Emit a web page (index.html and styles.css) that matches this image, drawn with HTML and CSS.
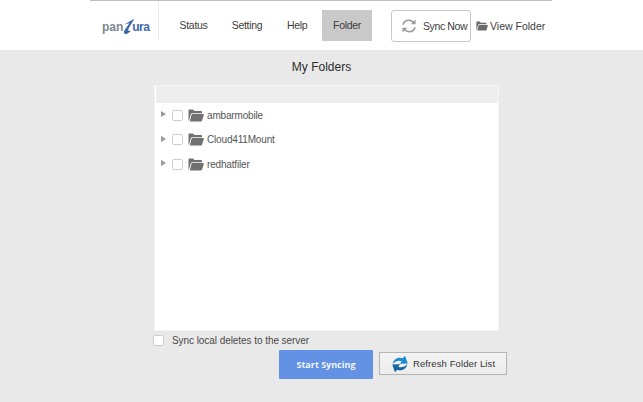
FILE: index.html
```html
<!DOCTYPE html>
<html lang="en">
<head>
<meta charset="utf-8">
<title>My Folders</title>
<link rel="stylesheet" href="styles.css">
</head>
<body>
<svg class="defs" width="0" height="0" aria-hidden="true">
  <symbol id="folder" viewBox="0 0 16 13">
    <path d="M0.5 11.5V1.6C0.5 1 1 .6 1.5 .6H5L6.4 2.1H13C13.6 2.1 14 2.5 14 3V4.2H4.2C3.5 4.2 3.1 4.5 2.9 5.1L.9 11.8C.7 11.9 .5 11.8 .5 11.5Z"/>
    <path d="M4.3 5H15C15.6 5 16 5.5 15.8 6L14 11.8C13.8 12.3 13.4 12.6 12.9 12.6H1.8L3.6 5.5C3.7 5.2 4 5 4.3 5Z"/>
  </symbol>
</svg>
<header class="topbar">
  <div class="topbar-inner">
    <div class="logo"><span class="logo-pan">pan</span><svg class="logo-z" viewBox="0 0 13 17" aria-hidden="true"><path d="M2.5 6.5 12.5 .5 6.6 10.5C5.6 12.4 6.2 13.2 9 13.2L4.2 16.2C1.4 15.6 1.6 13.6 3 11.4L7.4 5.2Z"/></svg><span class="logo-ura">ura</span></div>
    <nav class="nav">
      <a class="nav-item">Status</a>
      <a class="nav-item">Setting</a>
      <a class="nav-item">Help</a>
      <a class="nav-item nav-active">Folder</a>
    </nav>
    <button class="sync-now">
      <svg class="sync-icon" viewBox="0 0 18 18" aria-hidden="true">
        <path class="sync-stroke" d="M2.2 7.6C3 4.6 5.7 2.6 8.9 2.6 11 2.6 12.8 3.4 14.2 5"/>
        <path class="sync-fill" d="M16.4 1.6V7H11Z"/>
        <path class="sync-stroke" d="M15.8 10.4C15 13.4 12.3 15.4 9.1 15.4 7 15.4 5.2 14.6 3.8 13"/>
        <path class="sync-fill" d="M1.6 16.4V11H7Z"/>
      </svg>
      <span>Sync Now</span>
    </button>
    <a class="view-folder"><svg class="view-folder-icon"><use href="#folder"/></svg>View Folder</a>
  </div>
</header>
<main class="content">
  <h1 class="title">My Folders</h1>
  <section class="panel">
    <div class="panel-head"></div>
    <ul class="tree">
      <li class="tree-row"><span class="caret"></span><span class="check"></span><svg class="tree-folder"><use href="#folder"/></svg><span>ambarmobile</span></li>
      <li class="tree-row"><span class="caret"></span><span class="check"></span><svg class="tree-folder"><use href="#folder"/></svg><span>Cloud411Mount</span></li>
      <li class="tree-row"><span class="caret"></span><span class="check"></span><svg class="tree-folder"><use href="#folder"/></svg><span>redhatfiler</span></li>
    </ul>
  </section>
  <label class="delete-option"><span class="check check-outer"></span>Sync local deletes to the server</label>
  <div class="actions">
    <button class="start">Start Syncing</button>
    <button class="refresh">
      <svg class="refresh-icon" viewBox="0 0 20 20" aria-hidden="true">
        <path class="refresh-a" d="M2 10C2.4 5 7.6 1.6 13.2 3.6L15.6 .8 18.6 9.4 9.8 9.6 12 6.9C8 5.4 4.4 6.8 2 10Z"/>
        <path class="refresh-b" d="M18 10C17.6 15 12.4 18.4 6.8 16.4L4.4 19.2 1.4 10.6 10.2 10.4 8 13.1C12 14.6 15.6 13.2 18 10Z"/>
      </svg>
      <span>Refresh Folder List</span>
    </button>
  </div>
</main>
</body>
</html>
```
FILE: styles.css
```css
* { box-sizing: border-box; }
html, body { margin: 0; height: 100%; }
body {
  width: 643px;
  height: 402px;
  overflow: hidden;
  background: #e9e9e9;
  font-family: "Liberation Sans", Arial, sans-serif;
  color: #3a3a3a;
  display: flex;
  flex-direction: column;
}
.defs { position: absolute; }
.topbar { height: 50px; background: #fff; flex: none; }
.topbar-inner {
  margin-left: 90px;
  width: 462px;
  height: 50px;
  border-top: 1px solid #bdbdbd;
  display: flex;
  align-items: flex-start;
}
.logo {
  width: 69px;
  height: 39px;
  border-right: 1px solid #ececec;
  padding: 18px 0 0 12px;
  display: flex;
  align-items: flex-start;
  font-size: 12px;
  font-weight: 700;
  line-height: 17px;
}
.logo-pan { color: #7c8696; }
.logo-ura { color: #3c67ad; margin-left: -3px; letter-spacing: -.6px; }
.logo-z { width: 13px; height: 17px; fill: #3c67ad; margin: -1px 0 0 -1px; flex: none; }
.nav { display: flex; margin: 9px 0 0 0; }
.nav-item {
  height: 31px;
  line-height: 31px;
  font-size: 10.5px;
  letter-spacing: -.3px;
  color: #3c3c3c;
  text-align: center;
}
.nav-item:nth-child(1) { width: 69px; }
.nav-item:nth-child(2) { width: 38px; }
.nav-item:nth-child(3) { width: 20px; margin-left: 21px; }
.nav-item:nth-child(4) { margin-left: 15px; }
.nav-active { width: 50px; background: #c9c9c9; }
.sync-now {
  margin: 9px 0 0 19px;
  width: 80px;
  height: 32px;
  padding: 0 0 0 9px;
  border: 1px solid #c8c8c8;
  border-radius: 3px;
  background: #fff;
  display: flex;
  align-items: center;
  gap: 6px;
  font: 10.5px "Liberation Sans", Arial, sans-serif;
  letter-spacing: -.4px;
  color: #3c3c3c;
  white-space: nowrap;
}
.sync-icon { width: 16px; height: 16px; flex: none; }
.sync-stroke { fill: none; stroke: #999; stroke-width: 1.8; }
.sync-fill { fill: #999; }
.view-folder {
  margin: 9px 0 0 5px;
  height: 32px;
  display: flex;
  align-items: center;
  gap: 2px;
  font-size: 10.5px;
  color: #3c3c3c;
  white-space: nowrap;
}
.view-folder-icon { width: 12px; height: 10px; fill: #6a6a6a; flex: none; }
.content { flex: 1; display: flex; flex-direction: column; }
.title {
  margin: 10px 0 0;
  height: 15px;
  line-height: 15px;
  text-align: center;
  font-size: 12px;
  font-weight: 400;
  color: #2c2c2c;
}
.panel {
  margin: 10px 0 0 154px;
  width: 345px;
  height: 246px;
  background: #fff;
  border: 1px solid #f3f3f3;
}
.panel-head { height: 17px; background: #eeeeee; margin-left: 1px; }
.tree { list-style: none; margin: 0; padding: 0; }
.tree-row {
  height: 24.5px;
  padding: 0 0 0 6px;
  display: flex;
  align-items: center;
  font-size: 10px;
  letter-spacing: -.17px;
  color: #555;
}
.caret {
  width: 0;
  height: 0;
  border-left: 5px solid #999;
  border-top: 3.5px solid transparent;
  border-bottom: 3.5px solid transparent;
  margin-right: 6px;
  transform: translateY(-1px);
}
.check {
  width: 11px;
  height: 11px;
  flex: none;
  background: #fff;
  border: 1px solid #cdcdcd;
  border-radius: 2px;
}
.tree-folder { width: 16px; height: 13px; fill: #707070; margin: 0 3px 0 5px; flex: none; }
.delete-option {
  margin: 3px 0 0 153px;
  height: 12px;
  display: flex;
  align-items: center;
  font-size: 10px;
  letter-spacing: -.06px;
  color: #4a4a4a;
}
.check-outer { margin-right: 8px; }
.actions { margin: 4px 0 0 279px; display: flex; align-items: flex-start; gap: 6px; }
.start {
  width: 94px;
  height: 29px;
  border: 0;
  border-radius: 1px;
  background: #6391e3;
  color: #f1f4fb;
  font: 700 9px "Open Sans", "Liberation Sans", sans-serif;
  padding: 0;
}
.refresh {
  width: 128px;
  height: 23px;
  margin-top: 2px;
  padding: 0 0 0 11px;
  border: 1px solid #b4b4b4;
  background: linear-gradient(#f4f4f4, #ececec);
  display: flex;
  align-items: center;
  gap: 4px;
  font: 9.5px "Liberation Sans", Arial, sans-serif;
  letter-spacing: .1px;
  color: #333;
  white-space: nowrap;
}
.refresh-icon { width: 18px; height: 18px; flex: none; }
.refresh-a { fill: #1c8ad0; }
.refresh-b { fill: #14649f; }
```
